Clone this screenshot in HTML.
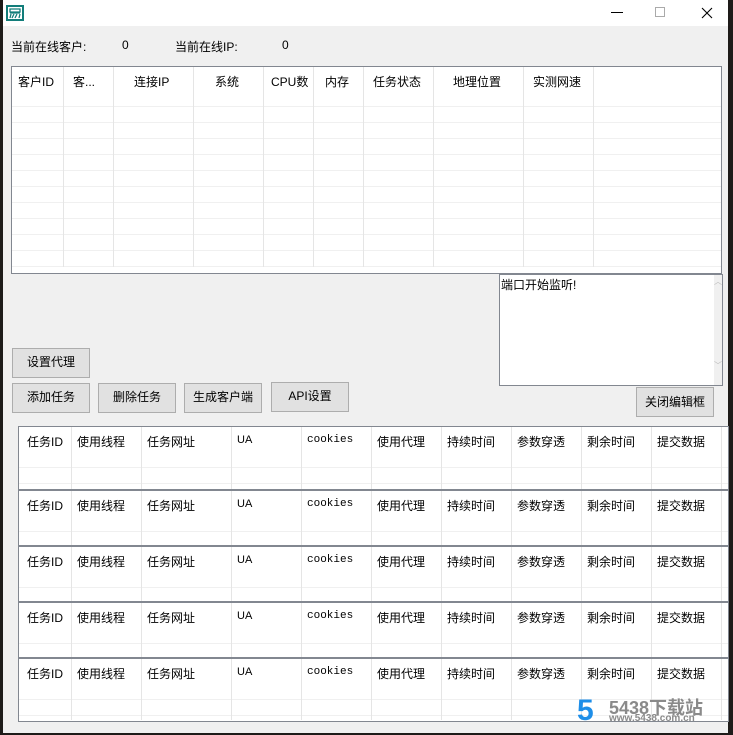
<!DOCTYPE html>
<html><head><meta charset="utf-8"><style>
*{margin:0;padding:0;box-sizing:border-box}
body{width:733px;height:735px;background:#1e1b19;position:relative;overflow:hidden;font-family:"Liberation Sans","Noto Sans CJK SC","WenQuanYi Zen Hei",sans-serif;font-size:12px;color:#000}
.win{position:absolute;left:3px;top:0;width:725px;height:733px;background:#f0f0f0}
.title{position:absolute;left:0;top:0;width:725px;height:26px;background:#fff}
.a{position:absolute;white-space:nowrap}
.tbl{position:absolute;background:#fff;border:1px solid #828790;overflow:hidden}
.vl{position:absolute;width:1px;background:#e5e5e5}
.hl{position:absolute;height:1px;background:#f0f0f0;left:0;right:0}
.btn{position:absolute;background:#e1e1e1;border:1px solid #adadad;text-align:center;line-height:27px;font-size:12px}
.blk{position:absolute;left:0;right:0;background:#fff;border-top:2px solid #828790}
</style></head><body>
<div class="win">
<div class="title">
<svg class="a" style="left:3px;top:5px" width="18" height="16" viewBox="0 0 18 16"><rect width="18" height="16" fill="#127d7a"/><rect x="2" y="2" width="14" height="12" fill="#fff"/><path d="M4 4h10v3H4zM4 8h10M5 9l-1 4M8 9l-2 4M11 9l-2 4M14 9l-1 4" stroke="#127d7a" stroke-width="1.3" fill="none"/></svg>
<div class="a" style="left:608px;top:12px;width:12px;height:1px;background:#000"></div>
<div class="a" style="left:652px;top:7px;width:10px;height:10px;border:1px solid #aaa"></div>
<svg class="a" style="left:698px;top:7px" width="12" height="12"><path d="M1 1L11 11M11 1L1 11" stroke="#000" stroke-width="1.1"/></svg>
</div>
<div class="a" style="left:8px;top:38px">当前在线客户:</div>
<div class="a" style="left:119px;top:38px">0</div>
<div class="a" style="left:172px;top:38px">当前在线IP:</div>
<div class="a" style="left:279px;top:38px">0</div>

<div class="tbl" style="left:8px;top:66px;width:711px;height:208px;background:#fff">
<div style="position:absolute;left:0;right:0;top:24px;bottom:0;background:repeating-linear-gradient(to bottom,#fff 0,#fff 15px,#f0f0f0 15px,#f0f0f0 16px)"></div>
<div class="vl" style="left:51px;top:0;height:200px"></div><div class="vl" style="left:101px;top:0;height:200px"></div><div class="vl" style="left:181px;top:0;height:200px"></div><div class="vl" style="left:251px;top:0;height:200px"></div><div class="vl" style="left:301px;top:0;height:200px"></div><div class="vl" style="left:351px;top:0;height:200px"></div><div class="vl" style="left:421px;top:0;height:200px"></div><div class="vl" style="left:511px;top:0;height:200px"></div><div class="vl" style="left:581px;top:0;height:200px"></div>
<div class="a" style="left:6px;top:6px">客户ID</div><div class="a" style="left:61px;top:6px">客...</div><div class="a" style="left:122px;top:6px">连接IP</div><div class="a" style="left:203px;top:6px">系统</div><div class="a" style="left:259px;top:6px">CPU数</div><div class="a" style="left:313px;top:6px">内存</div><div class="a" style="left:361px;top:6px">任务状态</div><div class="a" style="left:441px;top:6px">地理位置</div><div class="a" style="left:521px;top:6px">实测网速</div>
</div>

<div class="a" style="left:496px;top:274px;width:224px;height:112px;background:#fff;border:1px solid #828790"></div>
<div class="a" style="left:711px;top:275px;width:8px;height:110px;background:#f0f0f0"></div>
<div class="a" style="left:711px;top:275px;width:8px;height:110px;color:#bbb;font-size:8px;text-align:center;line-height:14px">︿<br><br><br><br><br><br>﹀</div>
<div class="a" style="left:498px;top:276px">端口开始监听!</div>
<div class="btn" style="left:633px;top:387px;width:78px;height:30px;line-height:29px">关闭编辑框</div>

<div class="btn" style="left:9px;top:348px;width:78px;height:30px">设置代理</div>
<div class="btn" style="left:9px;top:383px;width:78px;height:30px">添加任务</div>
<div class="btn" style="left:95px;top:383px;width:78px;height:30px">删除任务</div>
<div class="btn" style="left:181px;top:383px;width:78px;height:30px">生成客户端</div>
<div class="btn" style="left:268px;top:382px;width:78px;height:30px">API设置</div>

<div class="tbl" style="left:15px;top:426px;width:711px;height:296px">
<div class="blk" style="top:-2px;height:66px"></div>
<div class="blk" style="top:62px;height:58px"></div>
<div class="blk" style="top:118px;height:58px"></div>
<div class="blk" style="top:174px;height:58px"></div>
<div class="blk" style="top:230px;height:66px"></div>
</div>
</div>
<div style="position:absolute;left:19px;top:427px;width:709px;height:293px;overflow:hidden">
<div style="position:absolute;left:0;top:0;width:709px;height:293px">
<div class="hl" style="top:40px"></div><div class="hl" style="top:56px"></div>
<div class="hl" style="top:104px"></div>
<div class="hl" style="top:160px"></div>
<div class="hl" style="top:216px"></div>
<div class="hl" style="top:272px"></div><div class="hl" style="top:288px"></div>
</div>
</div>
<div style="position:absolute;left:19px;top:427px;width:709px;height:293px;font-size:12px">
<div style="position:absolute;top:0;left:0;width:709px;height:62px">
<div class="vl" style="left:52px;top:0;height:62px"></div><div class="vl" style="left:122px;top:0;height:62px"></div><div class="vl" style="left:212px;top:0;height:62px"></div><div class="vl" style="left:282px;top:0;height:62px"></div><div class="vl" style="left:352px;top:0;height:62px"></div><div class="vl" style="left:422px;top:0;height:62px"></div><div class="vl" style="left:492px;top:0;height:62px"></div><div class="vl" style="left:562px;top:0;height:62px"></div><div class="vl" style="left:632px;top:0;height:62px"></div><div class="vl" style="left:702px;top:0;height:62px"></div>
<div class="a" style="left:8px;top:6px">任务ID</div><div class="a" style="left:58px;top:6px">使用线程</div><div class="a" style="left:128px;top:6px">任务网址</div><div class="a" style="left:218px;top:7px;font-size:11px">UA</div><div class="a" style="left:288px;top:7px;font-size:11px;font-family:'Liberation Mono',monospace">cookies</div><div class="a" style="left:358px;top:6px">使用代理</div><div class="a" style="left:428px;top:6px">持续时间</div><div class="a" style="left:498px;top:6px">参数穿透</div><div class="a" style="left:568px;top:6px">剩余时间</div><div class="a" style="left:638px;top:6px">提交数据</div>
</div>
<div style="position:absolute;top:64px;left:0;width:709px;height:54px">
<div class="vl" style="left:52px;top:0;height:54px"></div><div class="vl" style="left:122px;top:0;height:54px"></div><div class="vl" style="left:212px;top:0;height:54px"></div><div class="vl" style="left:282px;top:0;height:54px"></div><div class="vl" style="left:352px;top:0;height:54px"></div><div class="vl" style="left:422px;top:0;height:54px"></div><div class="vl" style="left:492px;top:0;height:54px"></div><div class="vl" style="left:562px;top:0;height:54px"></div><div class="vl" style="left:632px;top:0;height:54px"></div><div class="vl" style="left:702px;top:0;height:54px"></div>
<div class="a" style="left:8px;top:6px">任务ID</div><div class="a" style="left:58px;top:6px">使用线程</div><div class="a" style="left:128px;top:6px">任务网址</div><div class="a" style="left:218px;top:7px;font-size:11px">UA</div><div class="a" style="left:288px;top:7px;font-size:11px;font-family:'Liberation Mono',monospace">cookies</div><div class="a" style="left:358px;top:6px">使用代理</div><div class="a" style="left:428px;top:6px">持续时间</div><div class="a" style="left:498px;top:6px">参数穿透</div><div class="a" style="left:568px;top:6px">剩余时间</div><div class="a" style="left:638px;top:6px">提交数据</div>
</div>
<div style="position:absolute;top:120px;left:0;width:709px;height:54px">
<div class="vl" style="left:52px;top:0;height:54px"></div><div class="vl" style="left:122px;top:0;height:54px"></div><div class="vl" style="left:212px;top:0;height:54px"></div><div class="vl" style="left:282px;top:0;height:54px"></div><div class="vl" style="left:352px;top:0;height:54px"></div><div class="vl" style="left:422px;top:0;height:54px"></div><div class="vl" style="left:492px;top:0;height:54px"></div><div class="vl" style="left:562px;top:0;height:54px"></div><div class="vl" style="left:632px;top:0;height:54px"></div><div class="vl" style="left:702px;top:0;height:54px"></div>
<div class="a" style="left:8px;top:6px">任务ID</div><div class="a" style="left:58px;top:6px">使用线程</div><div class="a" style="left:128px;top:6px">任务网址</div><div class="a" style="left:218px;top:7px;font-size:11px">UA</div><div class="a" style="left:288px;top:7px;font-size:11px;font-family:'Liberation Mono',monospace">cookies</div><div class="a" style="left:358px;top:6px">使用代理</div><div class="a" style="left:428px;top:6px">持续时间</div><div class="a" style="left:498px;top:6px">参数穿透</div><div class="a" style="left:568px;top:6px">剩余时间</div><div class="a" style="left:638px;top:6px">提交数据</div>
</div>
<div style="position:absolute;top:176px;left:0;width:709px;height:54px">
<div class="vl" style="left:52px;top:0;height:54px"></div><div class="vl" style="left:122px;top:0;height:54px"></div><div class="vl" style="left:212px;top:0;height:54px"></div><div class="vl" style="left:282px;top:0;height:54px"></div><div class="vl" style="left:352px;top:0;height:54px"></div><div class="vl" style="left:422px;top:0;height:54px"></div><div class="vl" style="left:492px;top:0;height:54px"></div><div class="vl" style="left:562px;top:0;height:54px"></div><div class="vl" style="left:632px;top:0;height:54px"></div><div class="vl" style="left:702px;top:0;height:54px"></div>
<div class="a" style="left:8px;top:6px">任务ID</div><div class="a" style="left:58px;top:6px">使用线程</div><div class="a" style="left:128px;top:6px">任务网址</div><div class="a" style="left:218px;top:7px;font-size:11px">UA</div><div class="a" style="left:288px;top:7px;font-size:11px;font-family:'Liberation Mono',monospace">cookies</div><div class="a" style="left:358px;top:6px">使用代理</div><div class="a" style="left:428px;top:6px">持续时间</div><div class="a" style="left:498px;top:6px">参数穿透</div><div class="a" style="left:568px;top:6px">剩余时间</div><div class="a" style="left:638px;top:6px">提交数据</div>
</div>
<div style="position:absolute;top:232px;left:0;width:709px;height:61px">
<div class="vl" style="left:52px;top:0;height:61px"></div><div class="vl" style="left:122px;top:0;height:61px"></div><div class="vl" style="left:212px;top:0;height:61px"></div><div class="vl" style="left:282px;top:0;height:61px"></div><div class="vl" style="left:352px;top:0;height:61px"></div><div class="vl" style="left:422px;top:0;height:61px"></div><div class="vl" style="left:492px;top:0;height:61px"></div><div class="vl" style="left:562px;top:0;height:61px"></div><div class="vl" style="left:632px;top:0;height:61px"></div><div class="vl" style="left:702px;top:0;height:61px"></div>
<div class="a" style="left:8px;top:6px">任务ID</div><div class="a" style="left:58px;top:6px">使用线程</div><div class="a" style="left:128px;top:6px">任务网址</div><div class="a" style="left:218px;top:7px;font-size:11px">UA</div><div class="a" style="left:288px;top:7px;font-size:11px;font-family:'Liberation Mono',monospace">cookies</div><div class="a" style="left:358px;top:6px">使用代理</div><div class="a" style="left:428px;top:6px">持续时间</div><div class="a" style="left:498px;top:6px">参数穿透</div><div class="a" style="left:568px;top:6px">剩余时间</div><div class="a" style="left:638px;top:6px">提交数据</div>
</div>
</div>
<div class="a" style="left:577px;top:694px;font-size:30px;font-weight:bold;color:#1e8ee8;font-family:'Liberation Sans',sans-serif">5</div>
<div class="a" style="left:609px;top:694px;font-size:18px;font-weight:bold;color:#8a8a8a">5438下载站</div>
<div class="a" style="left:609px;top:713px;font-size:10px;font-weight:bold;color:#8a8a8a">www.5438.com.cn</div>
</body></html>
